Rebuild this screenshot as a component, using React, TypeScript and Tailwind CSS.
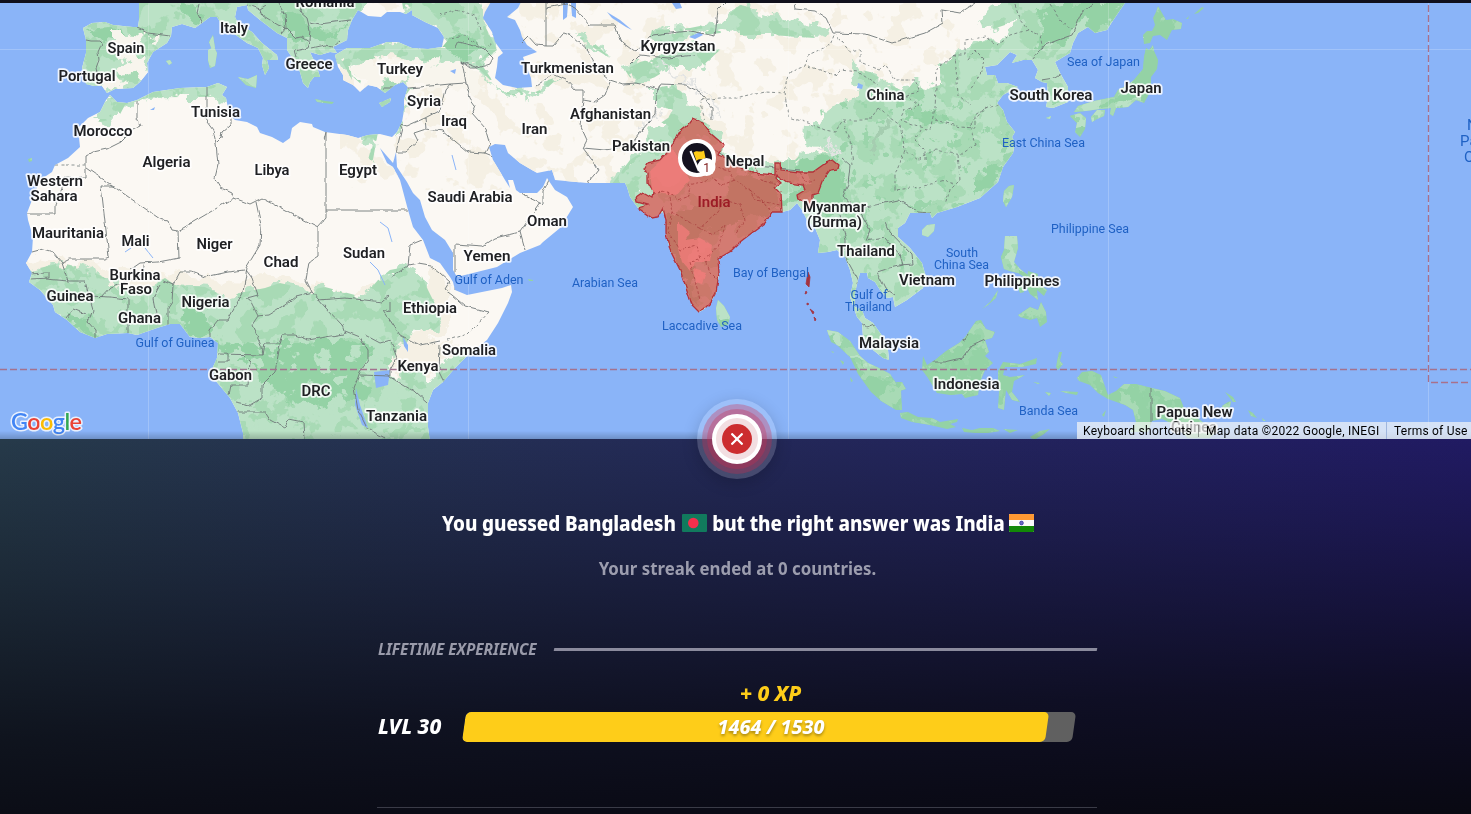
import React from "react";

const LAND = {
  mainland:
    "139,0 139,20 138,27 133,27 113,25 105,22 92,23 83,28 86,40 86,53 82,68 84,72 86,84 94,86 102,86 107,93 115,89 133,88 140,82 148,72 147,63 153,52 167,43 171,36 172,27 182,24 195,28 202,23 210,17 217,17 222,25 233,33 247,43 258,48 263,58 262,65 265,75 269,68 267,60 278,60 277,55 262,43 252,32 238,23 235,17 237,7 247,5 248,10 260,20 277,33 287,38 287,50 295,62 300,72 303,83 308,88 310,82 314,77 320,77 317,67 310,52 320,55 330,52 337,53 333,47 347,40 348,30 352,20 358,10 368,16 381,17 387,12 400,12 406,14 412,10 412,15 425,22 438,28 444,37 442,47 428,49 412,48 398,42 387,42 370,48 347,48 335,55 338,67 343,75 343,80 353,85 360,92 368,85 377,87 385,93 395,85 403,82 408,87 404,100 404,110 402,122 397,132 392,137 380,134 368,135 358,138 347,135 325,132 313,127 312,124 300,122 292,128 290,138 283,143 272,137 260,133 257,127 247,122 235,120 230,116 227,103 226,98 222,95 227,87 218,83 207,87 180,88 153,92 137,100 127,103 117,102 110,95 106,100 100,112 88,118 78,128 80,147 68,158 55,165 52,172 40,180 32,200 27,213 28,220 33,237 32,252 26,263 32,273 29,282 40,290 53,305 55,312 67,320 80,332 95,338 107,334 128,333 137,335 157,328 170,324 180,324 190,337 200,338 210,337 218,343 217,358 213,367 215,380 230,398 238,413 243,433 243,442 430,442 428,427 428,403 433,390 443,382 455,368 468,355 487,340 498,323 508,303 512,292 511,285 502,288 487,291 467,295 455,290 453,282 450,277 440,263 430,258 423,240 413,227 408,210 400,180 393,167 387,163 380,148 386,155 393,163 396,152 397,167 407,182 413,193 420,200 425,217 432,230 445,240 453,253 453,270 457,277 473,273 497,267 520,253 540,245 543,242 560,228 573,207 567,197 555,190 547,178 543,187 537,193 520,193 516,190 513,180 508,180 510,188 505,180 493,160 489,147 495,144 505,145 508,153 520,163 537,173 552,170 555,180 587,183 625,183 627,187 630,197 638,208 652,218 663,212 666,220 666,233 670,250 680,270 688,293 692,305 699,312 703,310 710,303 716,293 719,273 718,258 732,250 740,242 753,232 765,223 767,218 772,212 782,212 790,210 797,203 802,210 807,220 815,228 820,240 818,253 828,252 837,250 845,257 850,270 853,283 850,297 857,317 862,323 863,337 873,350 883,358 889,360 888,350 883,337 873,323 865,318 862,310 855,307 855,293 858,280 860,273 867,273 868,278 875,282 880,290 887,298 893,297 895,307 907,300 923,288 926,277 922,263 910,248 898,237 898,228 905,223 910,213 930,213 932,218 937,213 957,207 980,198 998,182 1003,167 1013,153 1015,143 1012,137 1015,132 1007,122 1003,110 997,103 1003,95 1018,87 1007,83 998,83 995,75 987,75 985,67 997,65 1010,52 1017,55 1012,63 1023,60 1032,60 1038,70 1035,78 1042,82 1047,83 1048,97 1046,107 1053,108 1068,102 1068,87 1060,73 1055,62 1070,53 1073,43 1078,33 1088,27 1095,33 1107,30 1112,22 1127,0",
};

const ISLANDS = [
  "213,35 215,48 212,50 209,42",
  "208,50 214,47 217,53 215,66 210,68 208,60",
  "238,77 248,79 257,75 256,88 246,85",
  "166,61 170,60 172,63 169,65",
  "315,99 325,101 334,102 332,104 317,102",
  "379,103 391,98 390,102 382,107",
  "28,159 32,158 32,161 29,162",
  "528,279 533,280 533,281 529,281",
  "718,300 724,306 730,317 728,325 721,327 717,320 716,308",
  "1014,185 1012,197 1006,207 1003,201 1004,191 1009,186",
  "922,230 927,225 935,224 934,231 928,237 922,235",
  "1158,6 1166,20 1173,19 1182,23 1181,29 1172,30 1167,40 1160,35 1153,36 1150,43 1144,44 1143,35 1147,31 1152,31 1155,25 1153,18 1156,12",
  "1194,14 1202,7 1204,8 1198,13",
  "1186,19 1189,16 1188,19",
  "1146,48 1149,50 1153,45 1154,51 1158,60 1157,69 1151,77 1151,87 1148,96 1144,103 1136,100 1128,107 1116,108 1113,116 1110,114 1111,108 1100,109 1086,111 1074,112 1078,106 1094,101 1114,97 1118,90 1126,86 1134,80 1143,69 1144,57",
  "1091,117 1097,110 1105,110 1104,116 1097,119 1092,122",
  "1070,116 1080,113 1086,118 1085,129 1080,137 1075,132 1077,123",
  "1046,118 1051,116 1050,119",
  "1005,236 1017,236 1018,248 1014,262 1020,269 1028,275 1026,278 1018,273 1010,271 1004,269 1001,257 1004,250",
  "1016,280 1022,280 1024,292 1020,293",
  "1028,271 1038,274 1037,282 1047,290 1044,296 1037,290 1038,300 1030,294 1026,286",
  "982,309 990,302 998,290 996,298 988,305",
  "1018,315 1030,307 1038,310 1041,302 1046,312 1047,322 1040,327 1037,318 1030,320 1020,317",
  "827,330 838,332 850,341 860,356 868,363 879,368 890,374 901,390 902,410 896,410 881,401 871,392 858,374 850,357 837,345 831,342",
  "831,351 834,352 833,353",
  "840,360 844,362 843,365",
  "850,377 853,381 851,382",
  "896,382 902,382 906,389 900,391",
  "900,413 908,412 918,417 932,418 940,422 958,419 957,422 950,424 956,427 947,429 930,425 912,422 901,418",
  "923,356 927,365 935,360 946,351 959,343 965,337 976,321 981,320 986,329 995,332 992,338 985,340 989,352 985,356 993,363 985,370 980,382 978,395 965,398 962,394 950,395 937,393 928,378 922,370",
  "998,380 998,371 1003,362 1020,364 1037,358 1036,364 1022,367 1005,367 1003,375 1010,377 1025,375 1014,381 1012,392 1020,402 1012,400 1006,390 1004,410 998,408 999,392",
  "1056,367 1059,352 1062,352 1060,361 1063,364 1058,370",
  "1060,391 1078,392 1077,395 1066,393",
  "1045,392 1051,393 1049,396",
  "1033,382 1040,383 1038,384",
  "962,428 972,430 980,428 993,428 1000,431 988,433 975,433 964,432",
  "1003,429 1018,430 1010,433",
  "1030,437 1040,431 1050,429 1044,434 1034,440",
  "1077,378 1082,372 1092,371 1101,375 1108,395 1116,391 1124,384 1136,384 1152,388 1165,391 1180,398 1184,408 1200,420 1216,432 1210,438 1188,438 1175,425 1162,419 1152,421 1148,432 1130,432 1136,422 1133,410 1125,405 1108,399 1098,393 1090,385 1079,381",
  "1102,415 1106,410 1104,417",
  "1222,406 1228,402 1231,401 1230,407 1224,410",
  "1225,392 1233,397 1236,402 1233,402",
  "1248,410 1253,413 1257,418 1251,416",
  "1262,418 1266,421 1263,421",
  "1113,376 1118,378 1115,378",
];

const GREENS = [
  "60,-20 362,-20 362,40 345,47 338,55 332,96 60,98",
  "335,48 352,80 350,62 370,60 385,55 418,60 458,65 470,60 500,90 520,90 530,100 500,92 480,62 497,50 482,20 470,-10 400,-10 405,20 440,30 448,40 440,50 400,40",
  "352,76 372,86 390,78 412,72 413,85 406,95 402,130 394,135 404,88 385,95 370,92",
  "225,100 215,92 170,95 145,98 125,105 118,118 100,122 90,118 118,90 200,80 235,80",
  "365,130 378,132 372,165 368,160 372,145 362,140",
  "20,278 40,268 60,263 85,268 105,278 120,292 150,286 165,278 175,285 205,287 225,297 245,292 265,288 280,283 310,290 325,287 355,295 372,287 378,280 390,270 410,266 420,272 428,290 438,310 440,325 430,333 415,331 405,345 398,342 395,360 390,378 402,384 400,360 410,372 420,370 425,385 440,372 455,350 470,345 465,358 440,390 435,445 220,445 200,345 90,350",
  "515,98 525,96 540,90 548,80 560,76 545,90 530,98",
  "575,33 585,36 600,48 610,58 600,52 585,42",
  "625,70 640,62 655,58 690,45 720,50 700,68 670,68 650,80 635,85",
  "652,30 690,28 720,22 740,5 760,10 740,30 720,33 680,38 665,45 650,38",
  "740,10 800,20 830,30 815,38 770,35 740,35",
  "655,88 672,85 690,100 705,118 720,145 735,160 795,160 805,150 830,160 840,300 640,330 600,200 630,160 640,195 650,140 665,125 672,110 655,105",
  "630,160 645,150 650,130 668,118 685,122 675,145 650,165 645,185 632,195",
  "850,67 870,72 890,85 905,92 913,83 930,88 940,85 940,66 960,50 978,42 990,37 998,45 1010,32 1015,15 1005,25 990,30 980,22 990,10 1010,-10 1140,-10 1140,120 1060,130 1040,260 930,320 880,380 790,300 800,190 790,165 830,150 805,143 807,130 822,122 820,110 835,104 852,100 856,90",
];

const DARK = [
  "217,340 240,345 260,350 275,347 283,335 305,345 345,336 372,352 360,375 368,395 345,400 320,410 290,402 265,378 245,362 218,362",
  "180,300 200,312 212,325 200,338 185,330",
  "65,312 85,318 98,338 80,332",
  "180,5 196,0 200,22 190,26 185,15",
  "85,30 110,28 130,34 112,40 92,38",
  "280,10 300,14 315,28 335,32 345,25 340,38 315,38 298,42 284,30",
  "418,45 440,40 450,30 470,35 480,50 462,60 445,48",
  "1040,8 1060,5 1090,0 1080,25 1060,42 1040,50 1030,50 1045,30",
  "1075,0 1127,0 1110,30 1090,28",
  "770,215 830,160 846,175 848,200 815,200 815,190",
  "665,215 670,250 690,295 700,305 695,280 690,255 700,235 730,225 765,215 780,205 775,180 740,170 720,200 690,210",
  "905,110 935,112 955,120 940,124 910,118",
  "975,175 998,160 1005,165 990,188 975,198",
  "930,360 960,350 985,345 985,390 930,395",
  "1140,45 1160,50 1150,90 1120,105 1100,108 1130,85",
  "1095,380 1130,388 1190,405 1180,410 1130,396",
  "795,160 838,155 845,210 830,225 815,200",
];

const CREAM_IN_GREEN = [
  "110,32 125,32 145,34 140,46 128,50 136,58 146,60 148,72 140,80 130,76 120,70 126,60 120,54 110,48",
  "100,76 115,80 128,82 122,88 106,86",
  "150,40 162,36 156,46",
  "350,64 372,62 410,60 450,62 480,70 480,95 410,85 408,76 380,84 365,90 355,78",
];

const BORDERS = [
  "137,28 148,33 170,36", "86,40 91,41 100,41 102,43 98,52 99,60 96,68 97,73",
  "202,23 197,12 199,4", "248,5 260,9 266,5", "260,9 262,15 278,25 286,28 281,34", "286,28 285,15 278,3", "286,28 296,38 302,37 310,42 308,48 295,51",
  "302,3 300,12 307,18 310,30 309,40", "310,22 320,24 335,22 350,20", "312,48 325,45 333,47 340,41", "295,51 297,58",
  "207,87 207,108 204,118 213,130 216,143 218,165 215,178 221,188 232,193 234,198 200,218 178,231 179,258 158,262 140,263 130,270",
  "216,143 221,138 222,132 230,125 230,119", "234,198 250,204 262,198 318,227 326,218 326,132 324,140", "318,227 318,256 309,262 306,280 312,292 296,296 286,304 268,315 258,316 250,300 247,298 258,295 252,278 246,270",
  "256,202 261,225 260,245 246,268", "137,101 137,118 141,126 133,130 121,142 107,149 93,152 86,156 86,165 86,178 63,178 63,186",
  "63,186 55,205 55,214 27,214", "87,168 160,219 168,221 172,230 178,231", "114,186 101,186 109,257 104,259 70,259 62,263 53,252 43,249 32,252",
  "326,210 411,210", "29,274 45,273 49,273 49,278 30,279", "62,263 68,281 45,279", "68,281 85,281 90,300 93,310 88,322 95,330 95,338", "90,296 110,297 128,299 128,333", "66,318 73,309 85,314",
  "145,262 141,275 128,281 110,288 102,297", "153,298 158,325", "160,285 153,298", "163,281 173,285 172,302 168,308 168,325", "173,285 180,272 192,272 205,277 228,272 244,270",
  "247,268 243,292 228,320 218,320 210,330 210,337", "258,316 252,325 262,348 263,355 218,354", "263,355 265,344 280,344 283,335 295,335 308,340 343,334 345,331 360,337",
  "312,292 325,307 342,325 345,334", "280,345 275,372 262,385 262,398 250,405 235,402", "218,362 228,362 228,354", "242,354 250,362 248,385 231,385 229,395",
  "235,412 265,412 270,420 285,428 288,419 303,422 304,440", "360,337 368,350 368,360 360,372 354,388 358,410 368,430", "318,300 345,298 365,300 382,302 390,295",
  "390,278 402,270 408,266 410,245 422,240", "408,265 418,263 430,265 440,273 450,282 445,290 452,295 465,306 489,312", "383,310 400,335 420,345 440,341", "440,345 439,372 444,382", "391,342 397,358 390,370 390,377 415,392 427,403",
  "390,302 390,312 384,310", "365,335 380,343 391,340", "360,375 390,376", "370,430 385,438",
  "383,88 410,88 450,84 445,90 440,110 425,118 407,126 400,124", "450,84 466,83 470,98 475,105 472,113 485,128 490,145", "466,83 462,62 478,68 490,64 493,58 483,48 458,42 455,48", "462,62 470,68 478,68",
  "425,118 426,129 443,131 468,152 485,153 495,157", "426,129 414,133 418,141 405,152 397,152", "397,120 402,128 396,152", "485,153 489,145",
  "455,290 455,244 483,246 495,238 520,232 540,203 543,204 543,192 549,180", "520,232 525,250", "521,194 540,203",
  "546,3 546,46 536,45 528,36 522,42", "546,46 553,46 564,33 572,36 588,50 598,70 610,80 622,84 636,83 644,85 660,90", "546,8 566,4 575,8 590,25 615,25 620,40 636,52",
  "636,52 652,35 670,33 690,31 715,36 718,10 725,3", "630,65 640,55 668,58 695,55", "536,86 553,74 566,80 575,90 583,90 583,100 595,102 605,95 610,82",
  "583,100 580,125 587,140 583,148 592,160 598,170 590,180 588,184", "583,148 605,150 630,146 642,130 655,115 656,95 660,84 685,85 700,92 712,108 712,120",
  "794,3 795,9 815,11 826,18 833,33 865,34 892,43 925,33 943,23 942,10 960,13 972,5 975,3",
  "1032,60 1045,45 1058,40 1072,35 1082,12 1092,5", "1042,80 1055,78 1062,73", "842,158 850,165 848,185 843,195 852,205 865,207 885,203 898,200 918,212 930,213",
  "866,240 870,230 862,215 865,207", "866,240 885,237 900,255 903,265 890,268 877,272 885,288 895,295", "900,265 913,264 912,255 890,232 885,222", "840,215 846,240 846,258 858,280 855,292", "860,322 868,328 875,325",
  "927,356 932,362 945,362 962,358 972,345 985,339", "960,338 965,340 968,335", "1151,388 1151,435", "715,150 735,163 750,165 776,168 800,170",
];

const DASHED = [
  "55,165 86,165",
  "489,312 478,324 468,334 448,340",
  "705,120 700,100 720,98 740,98 765,92 785,93 788,78 790,72 805,66 808,55 830,45 835,33", "785,93 788,117 808,123 825,130 835,132 843,120 870,120 878,108", "808,66 835,75 840,70 858,72 878,85",
  "835,33 850,52 860,50 860,62 880,70 885,65 895,80 915,80 920,92 905,95", "905,95 920,105 905,110 900,120 930,130 935,108 937,68 955,55 965,55 965,40 985,37 997,45 1010,35 1028,30 1040,35 1043,50",
  "843,120 850,140 853,165", "878,108 890,118 900,125 905,150 918,160 925,155 935,150 960,155 975,145 970,125 985,108 1000,105", "935,120 960,127 975,128 975,115 990,105", "958,155 960,180 950,190 945,205", "905,150 895,175 895,190 920,187 945,180 955,185",
  "955,55 958,95 970,105", "968,60 975,50 985,60 980,75 970,90", "1015,5 1020,20 1028,30", "412,25 440,40 465,35 485,50 492,42", "1050,5 1060,20 1072,30",
  "925,160 925,150 915,140 920,130", "440,15 455,10 475,15 480,30",
];

const INDIA =
  "672,145 678,133 690,123 693,119 703,123 710,133 724,145 718,155 737,162 740,167 753,173 775,175 775,163 780,163 781,170 800,172 813,172 827,162 833,160 839,165 838,169 830,170 823,180 818,193 812,195 812,207 807,208 805,200 798,200 797,195 805,190 803,185 788,183 777,175 776,178 781,183 775,187 781,193 782,212 772,212 765,223 753,232 740,242 732,250 718,258 719,273 716,293 710,303 703,310 699,312 692,305 688,293 680,270 670,250 666,233 666,220 663,208 658,217 652,218 638,208 648,205 637,202 636,197 643,192 652,197 653,192 648,183 648,173 643,170 647,163 660,160 670,148";

const STATES = [
  "652,193 668,192 678,200 690,196 688,185 700,182 712,178 722,185 735,180 750,190 755,200 780,205", "668,192 672,212 690,222 700,228 715,215 725,200 740,205 745,220 735,235",
  "672,212 668,230 680,250 697,245 700,260 690,262 695,280 700,300", "700,228 712,235 725,225 720,245 705,258 710,272 718,280", "750,190 762,200 770,212", "735,180 728,170 712,166", "700,150 712,160 710,172",
  "800,172 805,182 815,180", "755,165 760,180 778,185",
];

const LAKES = [
  "492,0 485,12 483,18 492,32 495,42 503,53 498,57 497,67 495,78 503,85 517,88 532,87 531,78 525,63 523,57 537,52 527,45 522,37 520,30 515,20 507,17 518,8 522,0",
  "563,3 568,3 567,17 563,20", "571,3 576,3 576,18 572,16", "607,12 620,20 632,30 626,27 612,18", "672,3 680,3 682,8 676,9", "689,37 700,32 703,35 695,39",
  "374,372 390,370 388,385 376,388", "403,337 408,345 408,352 404,346", "356,388 360,405 368,428 362,425 355,405", "450,71 456,69 455,74", "150,110 155,107 154,110", "858,83 863,85 862,89 857,88",
];

type Place = [string, number, number, number?];

const COUNTRIES: Place[] = [
  ["Romania", 325, 7, 59], ["Italy", 234, 33, 28], ["Spain", 126, 53, 37], ["Portugal", 87, 81, 57], ["Greece", 309, 69, 47], ["Turkey", 400, 74, 46],
  ["Turkmenistan", 567.5, 73, 93], ["Kyrgyzstan", 678, 51, 75], ["Tunisia", 215.5, 117, 49], ["Morocco", 103, 136, 59], ["Algeria", 166.5, 167, 48],
  ["Libya", 272, 175, 35], ["Egypt", 358, 175, 38], ["Syria", 424, 106, 34], ["Iraq", 454, 126, 26], ["Iran", 534.5, 134, 26], ["Afghanistan", 610.5, 119, 81],
  ["Pakistan", 641, 151, 58], ["Nepal", 745, 166, 39], ["China", 885.5, 100, 38], ["South Korea", 1051, 100, 83], ["Japan", 1141, 93, 41],
  ["Western", 55, 186, 56], ["Sahara", 54, 201, 47], ["Mauritania", 68, 238, 72], ["Mali", 135.5, 246, 28], ["Niger", 214.5, 249, 36], ["Chad", 281, 267, 35],
  ["Sudan", 364, 258, 42], ["Saudi Arabia", 470, 202, 85], ["Oman", 547, 226, 40], ["Yemen", 487, 261, 47], ["Burkina", 135, 280, 51], ["Faso", 136, 294, 32],
  ["Guinea", 70, 301, 47], ["Ghana", 139.5, 323, 43], ["Nigeria", 205.5, 307, 48], ["Ethiopia", 430, 313, 54], ["Somalia", 469, 355, 54], ["Kenya", 418, 371, 41],
  ["Gabon", 230.5, 380, 43], ["DRC", 316, 396, 29], ["Tanzania", 396.5, 421, 61], ["Myanmar", 834.5, 212, 63], ["(Burma)", 834.5, 227, 55], ["Thailand", 866, 256, 58],
  ["Vietnam", 927, 285, 56], ["Philippines", 1022, 286, 75], ["Malaysia", 889, 348, 60], ["Indonesia", 966.5, 389, 66], ["Papua New", 1194.5, 417, 76], ["Guinea", 1194, 432, 46],
];

const SEAS: Place[] = [
  ["Gulf of Guinea", 175, 347, 79], ["Gulf of Aden", 489, 284, 69], ["Arabian Sea", 605, 287, 66], ["Laccadive Sea", 702, 330, 80], ["Bay of Bengal", 771, 277, 76],
  ["Sea of Japan", 1103.5, 66, 73], ["East China Sea", 1043.5, 147, 83], ["Philippine Sea", 1090, 233, 78], ["South", 962, 257, 32], ["China Sea", 961.5, 269, 55],
  ["Gulf of", 869, 299, 37], ["Thailand", 868.5, 311, 47], ["Banda Sea", 1048.5, 415, 59],
];

const ANDAMAN = ["808,272 810,277 809,287 806,284", "806,291 807,293 805,294", "807,303 809,304 807,305", "810,309 814,312 813,314", "814,317 816,319 815,321"];

function NoiseFilter({ id, freq, seed, gain, cut }: { id: string; freq: number; seed: number; gain: number; cut: number }) {
  return (
    <filter id={id} x="0" y="0" width="1471" height="442" filterUnits="userSpaceOnUse" colorInterpolationFilters="sRGB">
      <feTurbulence type="fractalNoise" baseFrequency={freq} numOctaves={4} seed={seed} result="n" />
      <feColorMatrix in="n" type="matrix" values={`0 0 0 0 0  0 0 0 0 0  0 0 0 0 0  ${gain} 0 0 0 ${cut}`} result="m" />
      <feComposite in="SourceGraphic" in2="m" operator="in" />
    </filter>
  );
}

function WorldMap() {
  const polys = (list: string[]) => list.map((p, i) => <polygon key={i} points={p} />);
  const lines = (list: string[]) => list.map((p, i) => <polyline key={i} points={p} />);
  return (
    <svg className="block h-full w-full" viewBox="0 3 1471 436" fontFamily="Roboto, sans-serif">
      <defs>
        <clipPath id="land">
          <polygon points={LAND.mainland} />
          {polys(ISLANDS)}
        </clipPath>
        <clipPath id="greens">{polys(GREENS)}{polys(ISLANDS)}</clipPath>
        <filter id="rag" x="0" y="-20" width="1471" height="480" filterUnits="userSpaceOnUse" colorInterpolationFilters="sRGB">
          <feTurbulence type="fractalNoise" baseFrequency="0.07" numOctaves={4} seed={4} />
          <feDisplacementMap in="SourceGraphic" scale="22" xChannelSelector="R" yChannelSelector="G" />
        </filter>
        <filter id="wiggle" x="0" y="0" width="1471" height="442" filterUnits="userSpaceOnUse" colorInterpolationFilters="sRGB">
          <feTurbulence type="fractalNoise" baseFrequency="0.12" numOctaves={2} seed={8} />
          <feDisplacementMap in="SourceGraphic" scale="4" xChannelSelector="R" yChannelSelector="G" />
        </filter>
        <NoiseFilter id="noiseA" freq={0.045} seed={3} gain={30} cut={-16.5} />
        <NoiseFilter id="noiseB" freq={0.05} seed={12} gain={30} cut={-15.5} />
        <NoiseFilter id="noiseC" freq={0.06} seed={21} gain={30} cut={-17.8} />
        <NoiseFilter id="noiseD" freq={0.08} seed={33} gain={30} cut={-19.2} />
      </defs>
      <rect x="0" y="0" width="1471" height="442" fill="#8ab4f8" />
      <g fill="#fbf8f3"><polygon points={LAND.mainland} /></g>
      <g fill="#94d2a5">{polys(ISLANDS)}</g>
      <g clipPath="url(#land)">
        <rect x="340" y="0" width="620" height="190" fill="#f5f0e4" filter="url(#noiseA)" />
        <polygon points="30,258 110,265 190,275 240,282 270,277 310,283 350,292 375,280 378,290 300,300 30,290" fill="#f5f0e4" filter="url(#rag)" />
        <polygon points="430,260 450,285 450,330 430,340 460,345 440,365 400,390 395,345 425,330" fill="#f5f0e4" filter="url(#rag)" />
        <g fill="#bbe2c6" filter="url(#rag)">{polys(GREENS)}</g>
        <g clipPath="url(#greens)">
          <rect x="0" y="0" width="1471" height="442" fill="#a8dab5" filter="url(#noiseB)" />
          <g fill="#94d2a5" filter="url(#rag)">{polys(DARK)}</g>
          <rect x="840" y="90" width="631" height="352" fill="#9bd5ab" filter="url(#noiseD)" />
          <rect x="0" y="345" width="440" height="95" fill="#bbe2c6" filter="url(#noiseC)" />
        </g>
        <g fill="#f8f5ed" filter="url(#rag)">{polys(CREAM_IN_GREEN)}</g>
        <g fill="none" stroke="#e3e4e3" strokeWidth="2" filter="url(#rag)">
          <polyline points="660,65 675,78 690,85 700,92 712,100 718,118" />
          <polyline points="815,150 828,142 838,155" />
          <polyline points="640,130 650,118 660,110" />
        </g>
        <polyline points="870,155 880,135 890,120" fill="none" stroke="#a5cdb0" strokeWidth="6" filter="url(#rag)" />
      </g>
      <g fill="#8ab4f8">{polys(LAKES)}</g>
      <g fill="none" stroke="#8ab4f8" strokeWidth="1">
        <polyline points="370,262 378,270 385,285" /><polyline points="125,252 131,248" /><polyline points="145,248 153,258" />
        <polyline points="380,222 388,228 392,242" /><polyline points="452,155 456,170" />
      </g>
      <g stroke="#ffffff" strokeOpacity="0.2" strokeWidth="1">
        <path d="M148.500 0V442M468.500 0V442M788.500 0V442M1108.500 0V442M1428.500 0V442M0 49.500H1471" />
      </g>
      <g clipPath="url(#land)" fill="none" stroke="#707879" strokeWidth="0.9">
        <g filter="url(#wiggle)">{lines(BORDERS)}</g>
        <g strokeDasharray="3 2.500" strokeWidth="0.8" filter="url(#wiggle)">{lines(DASHED)}</g>
      </g>
      <g fill="none" stroke="#a3728e" strokeWidth="1.300" strokeDasharray="7 3">
        <path d="M0 369.500H1471" />
        <path d="M1428.500 5V382.500H1471" stroke="#a9708a" />
      </g>
      <g filter="url(#wiggle)">
        <polygon points={INDIA} fill="#e62a30" fillOpacity="0.56" stroke="#b3323a" strokeWidth="1.300" />
        <g fill="#f47c7c" fillOpacity="0.75">
          <polygon points="650,170 672,150 690,180 676,196 652,192" />
          <polygon points="678,222 690,232 685,240 700,238 712,245 710,262 695,262 690,272 682,262 678,248" />
          <polygon points="694,268 706,272 702,284 696,282" />
        </g>
        <g fill="none" stroke="#a63a3a" strokeWidth="0.7" strokeDasharray="3 2">{lines(STATES)}</g>
      </g>
      <g fill="#a3323f" stroke="#a3323f" strokeWidth="0.8">{polys(ANDAMAN)}</g>

      <g fontSize="12.500" fill="#1f61c4" textAnchor="middle">
        {SEAS.map(([name, x, y, w], i) => (
          <text key={i} x={x} y={y} textLength={w} lengthAdjust="spacingAndGlyphs">{name}</text>
        ))}
      </g>
      <g fontSize="15" fill="#1f61c4">
        <text x="1467" y="130">North</text>
        <text x="1460" y="146">Pacific</text>
        <text x="1464" y="162">Ocean</text>
      </g>
      <g fontSize="14.500" fontWeight="600" fill="#202124" textAnchor="middle" stroke="#ffffff" strokeOpacity="0.85" strokeWidth="3.500" strokeLinejoin="round" paintOrder="stroke">
        {COUNTRIES.map(([name, x, y, w], i) => (
          <text key={i} x={x} y={y} textLength={w} lengthAdjust="spacingAndGlyphs">{name}</text>
        ))}
      </g>
      <text x="714" y="207" fontSize="14.500" fontWeight="600" fill="#9c1c26" textAnchor="middle" textLength="33" lengthAdjust="spacingAndGlyphs">India</text>
      <text x="11" y="430" fontFamily="Lato, sans-serif" fontSize="23.500" fontWeight="600" stroke="#ffffff" strokeOpacity="0.8" strokeWidth="3" strokeLinejoin="round" paintOrder="stroke" textLength="71">
        <tspan fill="#4285f4">G</tspan><tspan fill="#ea4335">o</tspan><tspan fill="#fbbc04">o</tspan><tspan fill="#4285f4">g</tspan><tspan fill="#34a853">l</tspan><tspan fill="#ea4335">e</tspan>
      </text>

      <circle cx="697" cy="158" r="17" fill="#14121f" stroke="#ffffff" strokeWidth="4" />
      <path d="M690.500 151L699 171" stroke="#ffffff" strokeWidth="2.200" />
      <path d="M693.500 152.500C697 149.500 700 153 704 150.500L705.500 158C702 160.500 699 157.500 696.500 161Z" fill="#fecd19" />
      <circle cx="706.500" cy="167" r="9" fill="#ffffff" />
      <text x="706.500" y="171.500" fontSize="12" fill="#7a1212" textAnchor="middle">1</text>
    </svg>
  );
}

function ResultMarker() {
  return (
    <div className="absolute -top-10 left-[697px] flex size-20 items-center justify-center rounded-full bg-white/17 shadow-[0_4px_16px_rgba(0,0,0,0.18)]">
      <div className="flex size-[70px] items-center justify-center rounded-full bg-[#cc2d4f]/32">
        <div className="flex size-[60px] items-center justify-center rounded-full bg-[#cc2d4f]/32">
          <div className="flex size-[50px] items-center justify-center rounded-full border-4 border-white bg-[#f2dee1]">
            <div className="flex size-[30px] items-center justify-center rounded-full bg-[#cc2d2f]">
              <svg viewBox="0 0 12 12" className="size-3">
                <path d="M1.200 1.200L10.800 10.800M10.800 1.200L1.200 10.800" stroke="white" strokeWidth="2.300" strokeLinecap="round" />
              </svg>
            </div>
          </div>
        </div>
      </div>
    </div>
  );
}

function BangladeshFlag() {
  return (
    <svg viewBox="0 0 25 18" className="h-[18px] w-[25px]">
      <rect width="25" height="18" rx="1" fill="#117a5d" />
      <circle cx="11.300" cy="9" r="5.300" fill="#f42f4c" />
    </svg>
  );
}

function IndiaFlag() {
  return (
    <svg viewBox="0 0 25 18" className="h-[18px] w-[25px]">
      <rect width="25" height="18" rx="1" fill="#fafafa" />
      <path d="M0 1a1 1 0 0 1 1-1h23a1 1 0 0 1 1 1v5H0Z" fill="#ff9933" />
      <path d="M0 12h25v5a1 1 0 0 1-1 1H1a1 1 0 0 1-1-1Z" fill="#128807" />
      <circle cx="12.500" cy="9" r="1.900" fill="#6a6ac0" stroke="#20209a" strokeWidth="0.6" />
    </svg>
  );
}

export default function App() {
  return (
    <div className="flex h-[814px] w-[1471px] flex-col overflow-hidden bg-[#10101c] pt-[3px] font-['Noto_Sans',sans-serif]">
      <section className="relative h-[436px] shrink-0">
        <WorldMap />
        <div className="absolute inset-x-0 bottom-0 h-2 bg-gradient-to-t from-black/20 to-transparent" />
        <div className="absolute right-0 bottom-0 flex h-[17px] w-[394px] items-center bg-[#f5f5f5]/70 font-[Roboto,sans-serif] text-[12px] leading-none whitespace-nowrap text-black">
          <span className="w-[122px] border-r border-[#555]/60 pl-1.5 tracking-[0.27px]">Keyboard shortcuts</span>
          <span className="w-[187px] pl-[7px] tracking-[0.26px]">Map data ©2022 Google, INEGI</span>
          <span className="flex h-full items-center border-l border-[#9fb6dd] pl-[7px] tracking-[0.22px]">Terms of Use</span>
        </div>
      </section>

      <section className="relative flex grow flex-col bg-[linear-gradient(178deg,rgba(8,8,16,0)_0%,rgba(8,8,16,0.32)_32%,rgba(8,8,16,0.76)_70%,rgba(8,8,16,0.98)_100%),linear-gradient(90deg,#263a4a_0%,#252e59_40%,#252860_60%,#241d6e_100%)] pl-[377px]">
        <ResultMarker />
        <div className="flex w-[720px] flex-col">
          <h1 className="mt-[70px] flex h-7 items-center justify-center text-[21px] leading-7 font-extrabold tracking-[-0.1px] whitespace-nowrap text-white">
            <span className="flex w-[237px] justify-center"><span className="scale-x-[0.9]">You guessed Bangladesh</span></span>
            <span className="mx-[5px]"><BangladeshFlag /></span>
            <span className="flex w-[292px] justify-center"><span className="scale-x-[0.9]">but the right answer was India</span></span>
            <span className="ml-[5px]"><IndiaFlag /></span>
          </h1>
          <p className="mt-[19px] flex h-6 items-center justify-center text-[18px] font-bold whitespace-nowrap text-[#9c9dae]">
            <span className="scale-x-[0.935]">Your streak ended at 0 countries.</span>
          </p>

          <div className="mt-[57px] flex h-6 items-center pl-px">
            <h2 className="w-[176px] origin-left scale-x-[0.93] text-[16.500px] font-bold whitespace-nowrap text-[#9a9baa] italic">LIFETIME EXPERIENCE</h2>
            <div className="h-[3px] grow -skew-x-12 bg-[#8b8b9d]" />
          </div>

          <div className="mt-[19px] flex h-7 items-center justify-center pl-[67px] text-[21px] font-extrabold text-[#fecd19] italic">+ 0 XP</div>
          <div className="mt-1 flex h-[30px] items-center">
            <div className="w-[87px] pl-px text-[21px] font-extrabold whitespace-nowrap text-white italic">LVL 30</div>
            <div className="relative flex h-[30px] w-[610px] -skew-x-[8deg] overflow-hidden rounded-[5px] bg-[#606060]">
              <div className="h-full w-[583px] rounded-[5px] bg-[#fecd19]" />
              <div className="absolute inset-0 flex skew-x-[8deg] items-center justify-center text-[19.500px] font-extrabold text-white italic [text-shadow:0_2px_3px_rgba(0,0,0,0.35)]"><span className="relative left-0.5">1464 / 1530</span></div>
            </div>
          </div>
          <div className="mt-[65px] h-px bg-[#3a3b47]" />
        </div>
      </section>
    </div>
  );
}
